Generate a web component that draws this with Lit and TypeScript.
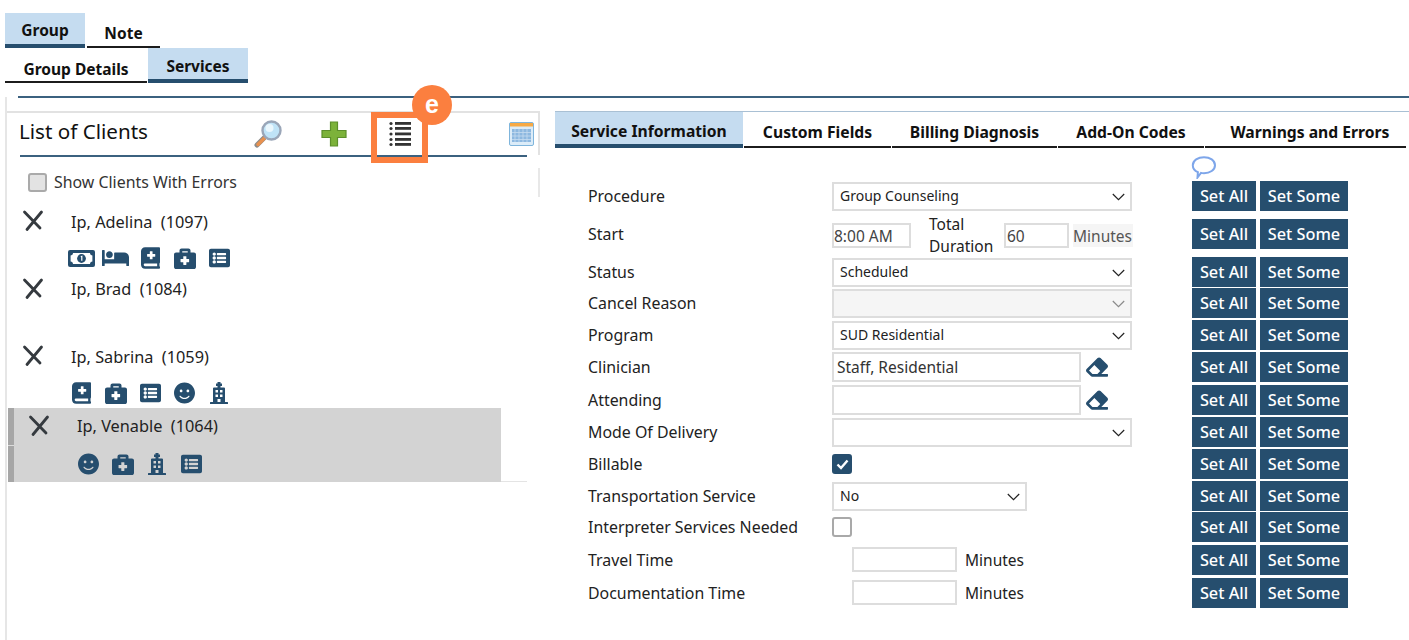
import { LitElement, html, css } from "lit";
import { customElement } from "lit/decorators.js";

const NAVY = "#264e6e";
const P: Record<string, [string, string]> = {
  bed: ["0 0 640 512", "M176 256c44.11 0 80-35.89 80-80s-35.89-80-80-80-80 35.89-80 80 35.89 80 80 80zm352-128H304c-8.84 0-16 7.16-16 16v144H64V80c0-8.84-7.16-16-16-16H16C7.16 64 0 71.16 0 80v352c0 8.84 7.16 16 16 16h32c8.84 0 16-7.16 16-16v-48h512v48c0 8.84 7.16 16 16 16h32c8.84 0 16-7.16 16-16V240c0-61.86-50.14-112-112-112z"],
  book: ["0 0 448 512", "M448 358.4V25.6c0-16-9.6-25.6-25.6-25.6H96C41.6 0 0 41.6 0 96v320c0 54.4 41.6 96 96 96h326.4c12.8 0 25.6-9.6 25.6-25.6v-16c0-6.4-3.2-12.8-9.6-19.2-3.2-16-3.2-60.8 0-73.6 6.4-3.2 9.6-9.6 9.6-19.2zM144 168a8 8 0 0 1 8-8h56v-56a8 8 0 0 1 8-8h48a8 8 0 0 1 8 8v56h56a8 8 0 0 1 8 8v48a8 8 0 0 1-8 8h-56v56a8 8 0 0 1-8 8h-48a8 8 0 0 1-8-8v-56h-56a8 8 0 0 1-8-8zm236.8 280H96c-19.2 0-32-12.8-32-32s16-32 32-32h284.8z"],
  brief: ["0 0 512 512", "M464 128h-80V80c0-26.5-21.5-48-48-48H176c-26.5 0-48 21.5-48 48v48H48c-26.5 0-48 21.5-48 48v288c0 26.5 21.5 48 48 48h416c26.5 0 48-21.5 48-48V176c0-26.5-21.5-48-48-48zM192 96h128v32H192V96zm160 248c0 4.4-3.6 8-8 8h-56v56c0 4.4-3.6 8-8 8h-56c-4.4 0-8-3.6-8-8v-56h-56c-4.4 0-8-3.6-8-8v-56c0-4.4 3.6-8 8-8h56v-56c0-4.4 3.6-8 8-8h56c4.4 0 8 3.6 8 8v56h56c4.4 0 8 3.6 8 8v56z"],
  list: ["0 0 512 512", "M464 480H48c-26.51 0-48-21.49-48-48V80c0-26.51 21.49-48 48-48h416c26.51 0 48 21.49 48 48v352c0 26.51-21.49 48-48 48zM128 120c-22.091 0-40 17.909-40 40s17.909 40 40 40 40-17.909 40-40-17.909-40-40-40zm0 96c-22.091 0-40 17.909-40 40s17.909 40 40 40 40-17.909 40-40-17.909-40-40-40zm0 96c-22.091 0-40 17.909-40 40s17.909 40 40 40 40-17.909 40-40-17.909-40-40-40zm288-136v-32c0-6.627-5.373-12-12-12H204c-6.627 0-12 5.373-12 12v32c0 6.627 5.373 12 12 12h200c6.627 0 12-5.373 12-12zm0 96v-32c0-6.627-5.373-12-12-12H204c-6.627 0-12 5.373-12 12v32c0 6.627 5.373 12 12 12h200c6.627 0 12-5.373 12-12zm0 96v-32c0-6.627-5.373-12-12-12H204c-6.627 0-12 5.373-12 12v32c0 6.627 5.373 12 12 12h200c6.627 0 12-5.373 12-12z"],
  smile: ["0 0 496 512", "M248 8C111 8 0 119 0 256s111 248 248 248 248-111 248-248S385 8 248 8zm80 168c17.7 0 32 14.3 32 32s-14.3 32-32 32-32-14.3-32-32 14.3-32 32-32zm-160 0c17.7 0 32 14.3 32 32s-14.3 32-32 32-32-14.3-32-32 14.3-32 32-32zm194.8 170.2C334.3 380.4 292.5 400 248 400s-86.3-19.6-114.8-53.8c-13.6-16.3 11-36.7 24.6-20.5 22.4 26.9 55.2 42.2 90.2 42.2s67.8-15.4 90.2-42.2c13.4-16.2 38.1 4.2 24.6 20.5z"],
  eraser: ["0 0 512 512", "M497.941 273.941c18.745-18.745 18.745-49.137 0-67.882l-160-160c-18.745-18.745-49.137-18.745-67.882 0l-256 256c-18.745 18.745-18.745 49.137 0 67.882l96 96A48.004 48.004 0 0 0 144 480h356c6.627 0 12-5.373 12-12v-40c0-6.627-5.373-12-12-12H355.883l142.058-142.059zm-302.627-62.627l137.373 137.373L265.373 416H150.628l-80-80 124.686-124.686z"],
};

const SIZES: Record<string, [number, number]> = {
  bed: [27, 22], book: [19, 22], brief: [22, 22], list: [21, 22], smile: [21, 22], eraser: [22, 22],
};

function icon(name: string) {
  if (name === "money")
    return html`<svg width="27" height="17" viewBox="0 0 27 17"><rect width="27" height="17" rx="2" fill="${NAVY}"/><path d="M5 3h17c0 1.400 1 2.400 2.400 2.400v6.200c-1.400 0-2.400 1-2.400 2.400H5c0-1.400-1-2.400-2.400-2.400V5.400C4 5.400 5 4.400 5 3z" fill="#fff"/><circle cx="13.500" cy="8.500" r="4.400" fill="${NAVY}"/><path d="M12.800 6.700l1-.4v4.400" stroke="#fff" stroke-width="1.200" fill="none"/></svg>`;
  if (name === "hospital")
    return html`<svg width="18" height="22" viewBox="0 0 18 22"><path fill-rule="evenodd" fill="${NAVY}" d="M7.500 0h3v1.500H12v2.500h-1.500v1.500H14a1 1 0 0 1 1 1V20h2.500a.5.500 0 0 1 .5.500V22H0v-1.500a.5.500 0 0 1 .5-.5H3V6.500a1 1 0 0 1 1-1h3.500V4H6V1.500h1.500zM5.500 8v2.500H8V8zm4.500 0v2.500h2.500V8zM5.500 12.500V15H8v-2.500zm4.500 0V15h2.500v-2.500zM7.500 17v3h3v-3z"/></svg>`;
  const [vb, d] = P[name];
  const [w, h] = SIZES[name];
  return html`<svg width="${w}" height="${h}" viewBox="${vb}"><path fill="${NAVY}" d="${d}"/></svg>`;
}

const xIcon = html`<svg class="x" width="22" height="22" viewBox="0 0 22 22"><path d="M2.500 2L18 18M19.500 2L5 19.500" stroke="#353a3f" stroke-width="2.800" fill="none" stroke-linecap="round"/></svg>`;
const chev = html`<svg class="chev" width="13" height="8" viewBox="0 0 13 8"><path d="M.8 1l5.700 5.600L12.200 1" stroke="#222" stroke-width="1.200" fill="none"/></svg>`;

const clients = [
  { name: "Ip, Adelina", id: "1097", icons: ["money", "bed", "book", "brief", "list"] },
  { name: "Ip, Brad", id: "1084", icons: [] as string[] },
  { name: "Ip, Sabrina", id: "1059", icons: ["book", "brief", "list", "smile", "hospital"] },
];
const selected = { name: "Ip, Venable", id: "1064", icons: ["smile", "brief", "hospital", "list"] };

const formRows: { label: string; kind: string; value?: string; narrow?: boolean }[] = [
  { label: "Procedure", kind: "select", value: "Group Counseling" },
  { label: "Start", kind: "start" },
  { label: "Status", kind: "select", value: "Scheduled" },
  { label: "Cancel Reason", kind: "disabled" },
  { label: "Program", kind: "select", value: "SUD Residential" },
  { label: "Clinician", kind: "lookup", value: "Staff, Residential" },
  { label: "Attending", kind: "lookup", value: "" },
  { label: "Mode Of Delivery", kind: "select", value: "" },
  { label: "Billable", kind: "checked" },
  { label: "Transportation Service", kind: "select", value: "No", narrow: true },
  { label: "Interpreter Services Needed", kind: "check" },
  { label: "Travel Time", kind: "minutes" },
  { label: "Documentation Time", kind: "minutes" },
];

@customElement("app-root")
export class AppRoot extends LitElement {
  static styles = css`
    :host { display: block; font-family: "Noto Sans", "Liberation Sans", sans-serif; color: #1c1c1c; }
    .page { width: 1409px; height: 640px; overflow: hidden; position: relative; background: #fff; }
    .tabs { display: flex; padding-left: 5px; }
    .tabs.first { padding-top: 13px; height: 35px; }
    .tabs.second { height: 35px; }
    .tab { font-weight: 700; font-size: 15.500px; line-height: 20px; color: #111; display: flex; justify-content: center; box-sizing: border-box; border-bottom: 2px solid #1c1c1c; padding-top: 10px; }
    .tab.on { background: #c5dcf0; border-bottom: 4px solid #264e6e; padding-top: 7px; }
    .first .tab.on { width: 80px; }
    .first .tab.off { width: 73px; margin-left: 2px; }
    .second .tab.off { width: 142px; padding-top: 11px; }
    .second .tab.on { width: 100px; margin-left: 1px; padding-top: 8px; }
    .rule { height: 2px; background: #3b617f; margin: 13px 0 0 18px; }
    .main { display: flex; margin-top: 13px; }

    .left { width: 533px; margin: -14px 0 0 5px; padding-top: 14px; border-left: 2px solid #e6e6e6; height: 530px; flex: none; position: relative; }
    .panel-head { display: flex; align-items: center; height: 42px; border-top: 2px solid #e2e2e2; border-right: 2px solid #e2e2e2; padding-left: 12px; }
    .title { font-size: 20.600px; color: #111; width: 233px; line-height: 26px; margin-bottom: 6px; }
    .tool { display: flex; align-items: center; justify-content: center; width: 33px; height: 30px; }
    .tool.plus { margin-left: 33px; }
    .tool.lines { margin-left: 33px; }
    .tool.cal { margin-left: 89px; }
    .head-rule { height: 2px; background: #3b617f; margin: 0 13px; }
    .err { display: flex; align-items: center; height: 29px; margin: 10.500px 0 9px 21px; gap: 7px; font-size: 15.900px; color: #333; border-right: 2px solid #e8e8e8; }
    .err i { width: 19px; height: 19px; box-sizing: border-box; display: block; background: #e3e3e3; border: 2px solid #aaa; border-radius: 3px; }
    .client { display: grid; grid-template-columns: 49px 1fr; align-content: start; height: 67.500px; box-sizing: border-box; padding: 3px 0 0 15px; }
    .client .x { margin-top: 1.500px; }
    .name { font-size: 16.300px; line-height: 20px; color: #222; padding-top: 3px; white-space: pre; height: 25px; box-sizing: border-box; }
    .icons { display: flex; grid-column: 2; margin-left: -7px; margin-top: 13.500px; }
    .slot { width: 34.500px; height: 22px; display: flex; align-items: center; justify-content: center; }
    .client.sel { background: #d3d3d3; width: 493px; height: 74px; padding: 5px 0 0 14px; margin-left: 1px; border-left: 6px solid #a6a6a6; position: relative; }
    .client.sel::before { content: ""; position: absolute; left: -6px; top: 37px; width: 6px; height: 1px; background: #dcdcdc; }
    .client.sel .icons { margin-top: 15px; margin-left: -6px; }
    .bottom { height: 1.500px; background: #e4e4e4; width: 519px; margin: -1.500px 0 0 1px; }

    .right { flex: 1; margin-left: 15px; }
    .rtabs { display: flex; border-top: 1.500px solid #a9c0d4; height: 36px; }
    .rtab { font-weight: 700; font-size: 15.700px; line-height: 20px; color: #111; display: flex; justify-content: center; box-sizing: border-box; border-bottom: 2px solid #1c1c1c; padding-top: 10px; margin-left: 1px; }
    .rtab.on { background: #c5dcf0; border-bottom: 4px solid #264e6e; padding-top: 9px; margin-left: 0; }
    .rtab.last { padding-left: 9px; }
    .bubble { margin: 8px 0 0 636px; height: 25px; }
    .bubble svg { display: block; }
    .form { display: grid; grid-template-columns: 244px 360px 1fr; grid-template-rows: 38px 38px 31px 32px 32px 33px 32px 32px 32px 31px 33px 33px 33px; margin-left: 33px; }
    .lab { font-size: 15.900px; color: #222; height: 31px; display: flex; align-items: center; padding-bottom: 2px; box-sizing: border-box; }
    .fld { display: flex; align-items: flex-start; height: 31px; }
    .sel-box { width: 300px; height: 29px; border: 2px solid #ddd; box-sizing: border-box; display: flex; align-items: center; justify-content: space-between; padding: 0 5px 0 6px; font-size: 14px; color: #222; background: #fff; margin-top: 1px; }
    .sel-box span { margin-top: -2px; }
    .sel-box.narrow { width: 195px; }
    .sel-box.dis { background: #f5f5f5; }
    .sel-box.dis .chev { opacity: .5; }
    .chev { flex: none; }
    .inp { border: 2px solid #ddd; box-sizing: border-box; height: 30px; width: 249px; font-size: 15.500px; display: flex; align-items: center; padding-left: 3px; color: #333; }
    .erase { margin-left: 5px; margin-top: 4px; }
    .start { align-items: center; }
    .time { width: 79px; height: 25px; border: 2px solid #ddd; box-sizing: border-box; font-size: 15.500px; display: flex; align-items: center; color: #444; margin-top: 2px; }
    .total { font-size: 15.500px; width: 75px; margin-left: 18px; line-height: 22px; color: #222; }
    .time.dur { width: 65px; padding-left: 1px; }
    .unit { font-size: 15.500px; color: #555; background: #f5f5f5; margin: 2px 0 0 4px; height: 23px; width: 60px; display: flex; align-items: center; }
    .box { width: 20px; height: 20px; box-sizing: border-box; border-radius: 3px; border: 2px solid #a9a9a9; margin-top: 5px; display: flex; align-items: center; justify-content: center; background: #fff; }
    .box.on { background: #264e6e; border-color: #264e6e; }
    .mins { width: 105px; height: 25px; border: 2px solid #ddd; box-sizing: border-box; margin: 2px 0 0 20px; }
    .unit2 { font-size: 15.500px; color: #222; line-height: 21px; margin: 5px 0 0 8px; }
    .btns { display: flex; gap: 4px; height: 30px; }
    .btn { background: #264e6e; color: #fff; font-size: 16.300px; font-weight: 500; display: flex; align-items: center; justify-content: center; height: 30px; box-sizing: border-box; padding-bottom: 1px; }
    .btn.all { width: 64px; }
    .btn.some { width: 88px; }

    .callout { position: absolute; left: 371px; top: 112px; width: 57px; height: 51px; border: 6px solid #fb7f3f; box-sizing: border-box; }
    .badge { position: absolute; left: 412px; top: 85px; width: 40px; height: 40px; border-radius: 50%; background: #fb7f3f; color: #fff; font: 700 25px "Liberation Sans", sans-serif; display: flex; align-items: center; justify-content: center; padding-bottom: 1px; box-sizing: border-box; }
  `;

  private clientRow(c: { name: string; id: string; icons: string[] }, sel = false) {
    return html`<div class="client ${sel ? "sel" : ""}">
      ${xIcon}
      <div class="name">${c.name}  (${c.id})</div>
      <div class="icons">${c.icons.map((i) => html`<div class="slot">${icon(i)}</div>`)}</div>
    </div>`;
  }

  private field(r: (typeof formRows)[number]) {
    switch (r.kind) {
      case "select":
        return html`<div class="fld"><div class="sel-box ${r.narrow ? "narrow" : ""}"><span>${r.value}</span>${chev}</div></div>`;
      case "disabled":
        return html`<div class="fld"><div class="sel-box dis"><span></span>${chev}</div></div>`;
      case "start":
        return html`<div class="fld start"><div class="time">8:00 AM</div><div class="total">Total Duration</div><div class="time dur">60</div><div class="unit">Minutes</div></div>`;
      case "lookup":
        return html`<div class="fld"><div class="inp">${r.value}</div><div class="erase">${icon("eraser")}</div></div>`;
      case "checked":
        return html`<div class="fld"><div class="box on"><svg width="13" height="11" viewBox="0 0 13 11"><path d="M1.500 5.500l3.500 3.500L11.500 1.500" stroke="#fff" stroke-width="2.400" fill="none"/></svg></div></div>`;
      case "check":
        return html`<div class="fld"><div class="box"></div></div>`;
      default:
        return html`<div class="fld"><div class="mins"></div><div class="unit2">Minutes</div></div>`;
    }
  }

  render() {
    const rtabs: [string, number, string][] = [
      ["Service Information", 188, "on"],
      ["Custom Fields", 147, ""],
      ["Billing Diagnosis", 165, ""],
      ["Add-On Codes", 146, ""],
      ["Warnings and Errors", 201, "last"],
    ];
    return html`<div class="page">
      <div class="tabs first"><div class="tab on">Group</div><div class="tab off">Note</div></div>
      <div class="tabs second"><div class="tab off">Group Details</div><div class="tab on">Services</div></div>
      <div class="rule"></div>
      <div class="main">
        <div class="left">
          <div class="panel-head">
            <div class="title">List of Clients</div>
            <div class="tool">
              <svg width="32" height="30" viewBox="0 0 32 30"><path d="M14 17L5 26" stroke="#8a8a8a" stroke-width="5" stroke-linecap="round"/><path d="M13 18.500L6 25.500" stroke="#e8914f" stroke-width="3.500" stroke-linecap="round"/><circle cx="19.500" cy="11.500" r="9" fill="#bfe3f7" stroke="#9aa6b8" stroke-width="2.400"/><circle cx="17.500" cy="9" r="4" fill="#eaf7fd"/></svg>
            </div>
            <div class="tool plus">
              <svg width="26" height="26" viewBox="0 0 26 26"><path d="M9.500 1h7v8.500H25v7h-8.500V25h-7v-8.500H1v-7h8.500z" fill="#7cb23a" stroke="#5c8f2b" stroke-width="1.200"/></svg>
            </div>
            <div class="tool lines">
              <svg width="24" height="26" viewBox="0 0 24 26"><g fill="#333"><circle cx="3" cy="2.500" r="1.600"/><circle cx="3" cy="7.500" r="1.600"/><circle cx="3" cy="13" r="1.600"/><circle cx="3" cy="18.500" r="1.600"/><circle cx="3" cy="23.500" r="1.600"/><rect x="7" y="1" width="16" height="2.800"/><rect x="7" y="6" width="16" height="2.800"/><rect x="7" y="11.500" width="16" height="2.800"/><rect x="7" y="17" width="16" height="2.800"/><rect x="7" y="22" width="16" height="2.800"/></g></svg>
            </div>
            <div class="tool cal">
              <svg width="25" height="24" viewBox="0 0 25 24"><rect x=".5" y=".5" width="24" height="23" rx="1.500" fill="#dcecf8" stroke="#7fb5dc"/><rect x="1" y="1" width="23" height="3.500" fill="#f6a945"/><rect x="3" y="7" width="19" height="13" fill="#8db8e0"/><path d="M6 7v13M10 7v13M14 7v13M18 7v13M3 10.500h19M3 14h19M3 17.500h19" stroke="#c6dcf0" stroke-width=".8"/></svg>
            </div>
          </div>
          <div class="head-rule"></div>
          <div class="err"><i></i><span>Show Clients With Errors</span></div>
          <div class="clients">
            ${clients.map((c) => this.clientRow(c))}
            ${this.clientRow(selected, true)}
            <div class="bottom"></div>
          </div>
        </div>
        <div class="right">
          <div class="rtabs">
            ${rtabs.map(([t, w, cls]) => html`<div class="rtab ${cls}" style="width:${w}px">${t}</div>`)}
          </div>
          <div class="bubble">
            <svg width="26" height="23" viewBox="0 0 26 23"><path d="M13 1.200c6 0 11 3.300 11 8s-5 8-11 8c-1 0-2 0-3-.3L6.500 21.500l.4-5.300C3.600 14.800 1.800 12.200 1.800 9.200 1.800 4.500 7 1.200 13 1.200z" fill="#fff" stroke="#7ea6ea" stroke-width="2"/></svg>
          </div>
          <div class="form">
            ${formRows.map(
              (r) => html`<div class="lab">${r.label}</div>${this.field(r)}
                <div class="btns"><div class="btn all">Set All</div><div class="btn some">Set Some</div></div>`
            )}
          </div>
        </div>
      </div>
      <div class="callout"></div>
      <div class="badge">e</div>
    </div>`;
  }
}
